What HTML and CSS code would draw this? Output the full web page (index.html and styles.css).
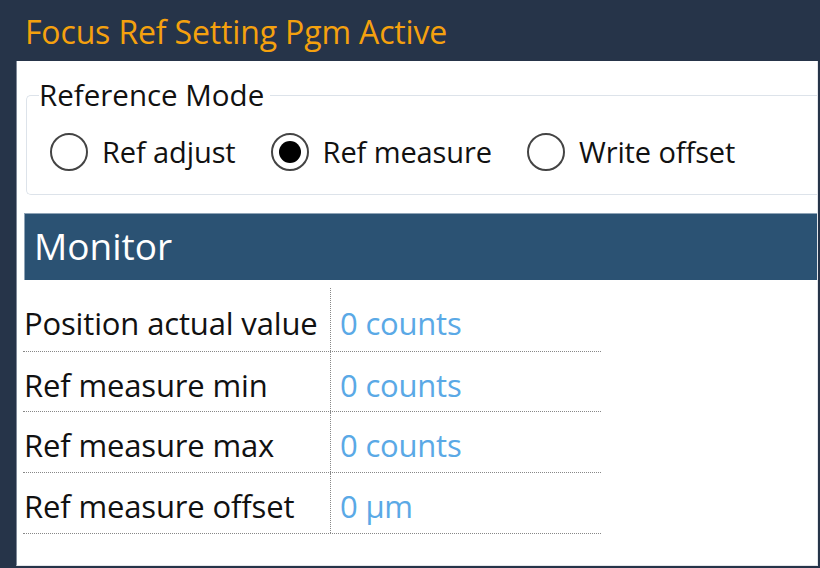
FILE: index.html
```html
<!DOCTYPE html>
<html>
<head>
<meta charset="utf-8">
<link rel="stylesheet" href="styles.css">
</head>
<body>
<div class="titlebar">Focus Ref Setting Pgm Active</div>
<div class="panel">
  <fieldset class="mode">
    <legend>Reference Mode</legend>
    <div class="radios">
      <label class="radio"><span class="dot"></span>Ref adjust</label>
      <label class="radio"><span class="dot on"></span>Ref measure</label>
      <label class="radio"><span class="dot"></span>Write offset</label>
    </div>
  </fieldset>
  <div class="monitor">Monitor</div>
  <div class="table">
    <div class="row"><div class="k">Position actual value</div><div class="v">0 counts</div></div>
    <div class="row"><div class="k">Ref measure min</div><div class="v">0 counts</div></div>
    <div class="row"><div class="k">Ref measure max</div><div class="v">0 counts</div></div>
    <div class="row"><div class="k">Ref measure offset</div><div class="v">0 µm</div></div>
  </div>
</div>
</body>
</html>
```
FILE: styles.css
```css
html, body { margin: 0; padding: 0; }
body {
  background: #263449;
  font-family: "Open Sans", "Noto Sans", sans-serif;
  width: 820px;
  height: 568px;
  overflow: hidden;
}
.titlebar {
  height: 61px;
  box-sizing: border-box;
  padding: 11px 0 0 25px;
  color: #f5a10e;
  font-size: 32px;
  line-height: 42px;
  letter-spacing: -0.15px;
}
.panel {
  margin-left: 16px;
  width: 802px;
  height: 505px;
  box-sizing: border-box;
  background: #fff;
  border-left: 1px solid #7f8a99;
  border-right: 1px solid #e4e6ea;
  border-bottom: 1px solid #e4e6ea;
  padding-top: 16px;
}
.mode {
  margin: 0 0 0 9px;
  padding: 0 0 0 23px;
  border: 1px solid #dde3ea;
  border-right: none;
  border-radius: 5px 0 0 5px;
  height: 118px;
  box-sizing: border-box;
}
.mode legend {
  padding: 0 6px 0 0;
  margin-left: -11px;
  font-size: 29.5px;
  line-height: 36px;
  color: #111;
}
.radios {
  display: flex;
  align-items: center;
  margin-top: 19px;
}
.radio {
  display: flex;
  align-items: center;
  font-size: 29px;
  color: #111;
  letter-spacing: -0.1px;
}
.radio + .radio { margin-left: 35px; }
.dot {
  width: 38px;
  height: 38px;
  border: 2px solid #444;
  border-radius: 50%;
  margin-right: 14px;
  box-sizing: border-box;
  position: relative;
}
.dot.on::after {
  content: "";
  position: absolute;
  left: 6px; top: 6px;
  width: 22px; height: 22px;
  border-radius: 50%;
  background: #000;
}
.monitor {
  margin: 18px 0 0 7px;
  height: 67px;
  box-sizing: border-box;
  background: #2b5273;
  border-top: 1px solid #8ea3b6;
  border-left: 1px solid #8ea3b6;
  color: #fff;
  font-size: 37px;
  line-height: 64px;
  padding-left: 9px;
}
.table {
  margin: 8px 0 0 6px;
  width: 578px;
}
.row {
  display: flex;
  height: 61px;
  border-bottom: 1px dotted #888;
  box-sizing: border-box;
}
.row:first-child { height: 64px; }
.row:nth-child(2) { height: 60px; }
.k {
  width: 308px;
  border-right: 1px dotted #888;
  font-size: 31px;
  color: #111;
  display: flex;
  align-items: center;
  padding-left: 1px;
  padding-top: 6px;
  letter-spacing: -0.15px;
  box-sizing: border-box;
}
.v {
  padding-left: 9px;
  font-size: 31px;
  color: #5aa9e6;
  display: flex;
  align-items: center;
  padding-top: 6px;
  letter-spacing: -0.2px;
}
```
